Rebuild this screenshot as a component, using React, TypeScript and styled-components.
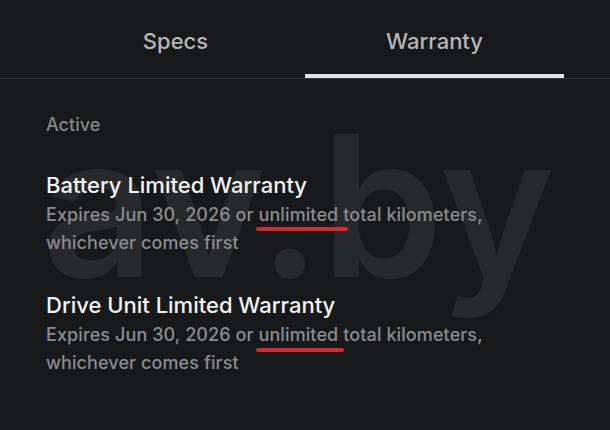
import React from "react";
import styled, { createGlobalStyle } from "styled-components";

const Global = createGlobalStyle`
  html, body { margin: 0; padding: 0; background: #18191b; }
  body { font-family: Inter, "Noto Sans", Roboto, sans-serif; -webkit-font-smoothing: antialiased; }
`;

const Page = styled.div`
  position: relative;
  width: 610px;
  height: 430px;
  background: #18191b;
  overflow: hidden;
`;

const Tabs = styled.div`
  display: grid;
  grid-template-columns: 1fr 1fr;
  padding: 0 46px;
  height: 79px;
  box-sizing: border-box;
  border-bottom: 1px solid #343538;
`;

const Tab = styled.div<{ $active?: boolean }>`
  display: flex;
  align-items: center;
  justify-content: center;
  box-sizing: border-box;
  height: 78px;
  padding-top: 8px;
  font-size: 22px;
  font-weight: 500;
  color: #b6b7b9;
  border-bottom: 4px solid ${(p) => (p.$active ? "#e3e3e4" : "transparent")};
`;

const Content = styled.div`
  position: relative;
  z-index: 1;
  display: flex;
  flex-direction: column;
  padding: 32px 46px 0;
`;

const Status = styled.div`
  font-size: 18px;
  line-height: 28px;
  font-weight: 500;
  color: #87888b;
  margin-bottom: 32px;
`;

const Item = styled.div`
  display: flex;
  flex-direction: column;
  gap: 2px;
  margin-bottom: 34px;
`;

const Title = styled.div`
  font-size: 22px;
  line-height: 28px;
  font-weight: 500;
  color: #f2f2f3;
`;

const Desc = styled.div`
  font-size: 18px;
  line-height: 28px;
  font-weight: 500;
  letter-spacing: 0.1px;
  color: #8b8c8f;
`;

const Mark = styled.span<{ $right: number; $bottom: number }>`
  position: relative;
  &::after {
    content: "";
    position: absolute;
    left: -3px;
    right: ${(p) => p.$right}px;
    bottom: ${(p) => p.$bottom}px;
    height: 4px;
    border-radius: 2px;
    background: #d32a35;
  }
`;

const Watermark = styled.div`
  position: absolute;
  left: 42px;
  top: 108px;
  font-size: 196px;
  line-height: 1;
  font-weight: 600;
  letter-spacing: 0px;
  color: rgba(255, 255, 255, 0.07);
  pointer-events: none;
  user-select: none;
`;

const items = [
  { title: "Battery Limited Warranty", right: -10, bottom: -6 },
  { title: "Drive Unit Limited Warranty", right: -6, bottom: -7 },
];

export default function App() {
  return (
    <Page>
      <Global />
      <Tabs>
        <Tab>Specs</Tab>
        <Tab $active>Warranty</Tab>
      </Tabs>
      <Watermark>av.by</Watermark>
      <Content>
        <Status>Active</Status>
        {items.map((it) => (
          <Item key={it.title}>
            <Title>{it.title}</Title>
            <Desc>
              Expires Jun 30, 2026 or <Mark $right={it.right} $bottom={it.bottom}>unlimited</Mark> total kilometers,
              <br />
              whichever comes first
            </Desc>
          </Item>
        ))}
      </Content>
    </Page>
  );
}
